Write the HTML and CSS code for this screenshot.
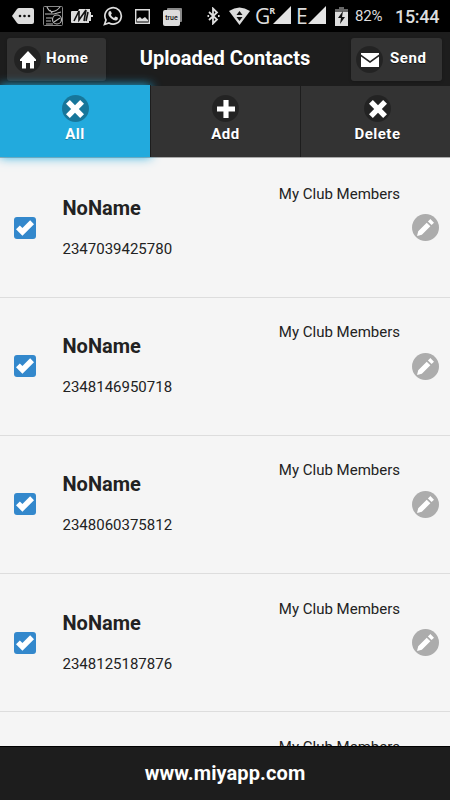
FILE: index.html
```html
<!DOCTYPE html>
<html lang="en">
<head>
  <meta charset="UTF-8">
  <meta name="viewport" content="width=device-width, initial-scale=1">
  <title>Uploaded Contacts</title>
  <link rel="stylesheet" href="styles.css">
</head>
<body>
  <!-- shared icons -->
  <svg class="defs" width="0" height="0">
    <symbol id="delete" viewBox="0 0 14 14">
      <path d="M14 3 11 0 7 4 3 0 0 3l4 4-4 4 3 3 4-4 4 4 3-3-4-4z"/>
    </symbol>
    <symbol id="plus" viewBox="0 0 14 14">
      <path d="M14 5H9V0H5v5H0v4h5v5h4V9h5z"/>
    </symbol>
    <symbol id="check" viewBox="0 0 14 14">
      <path d="M14 4 11 1 5.003 6.997 3 5 0 8l5 5z"/>
    </symbol>
    <symbol id="edit" viewBox="0 0 14 14">
      <path d="M1 10 0 14l4-1 7-7-3-3zM11 0 9 2l3 3 2-2z"/>
    </symbol>
    <symbol id="signal" viewBox="0 0 18 18">
      <path d="M18 0v18H0z"/>
    </symbol>
  </svg>

  <div class="status">
    <svg class="s-more" width="22" height="18" viewBox="0 0 22 18">
      <path fill="#ddd" d="M7 1h13q2 0 2 2v12q0 2-2 2H7q-1 0-2-1L0 9l5-7q1-1 2-1z"/>
      <g fill="#111"><circle cx="8" cy="9" r="1.3"/><circle cx="12.500" cy="9" r="1.300"/><circle cx="17" cy="9" r="1.300"/></g>
    </svg>
    <svg class="s-news" width="20" height="20" viewBox="0 0 20 20" fill="none" stroke="#bbb" stroke-width="1.200">
      <rect x=".5" y=".5" width="19" height="19" rx="1" stroke="#888" stroke-width="1"/>
      <path d="M4 1q2 5 6 4.500T17 1M2 8h9l7-2M3 12h6M3 15h5M3 18h7M9 7 7 4"/>
      <circle cx="14" cy="13.500" r="4.500"/>
      <path d="m11 16 6-4"/>
    </svg>
    <svg class="s-m" width="23" height="18" viewBox="0 0 23 18">
      <path fill="#ddd" d="M1 4h6l1-2h11v3h1v3h2v2h-2v4h-2v2H1q-1 0-1-1V5q0-1 1-1z"/>
      <path d="M3 14 8 4v9l7-10-2 11M17 5l-2 9" fill="none" stroke="#111" stroke-width="1.600"/>
    </svg>
    <svg class="s-whatsapp" width="20" height="20" viewBox="0 0 20 20">
      <path d="M1.500 18.500 3 14a8.200 8.200 0 1 1 3 3z" fill="none" stroke="#ddd" stroke-width="1.700"/>
      <path d="M6 5.500q1-1 2 0l.8 2-.9 1.500q1 2 3.100 3l1.500-1.400 2.300 1q.6 2.500-2 3-2 0-4.800-2.300T5.300 8q0-1.500.7-2.500z" fill="#ddd"/>
    </svg>
    <svg class="s-image" width="15" height="15" viewBox="0 0 15 15">
      <path d="M.7.700h13.600v13.600H.7z" fill="none" stroke="#ddd" stroke-width="1.400"/>
      <path d="M2 12.500V10l3-2 2 2 3-2 3 3v1.500z" fill="#ddd"/>
    </svg>
    <span class="s-true">true</span>
    <svg class="s-bt" width="13" height="18" viewBox="0 0 13 18" fill="none" stroke="#ddd" stroke-width="1.800">
      <path d="m2 5 8 7.500-4 4v-15l4 4L2 13"/>
      <path d="M.5 9h1.600M11 9h1.600"/>
    </svg>
    <svg class="s-wifi" width="21" height="18" viewBox="0 0 21 18">
      <path d="M0 4q10.500-7 21 0L10.500 18z" fill="#ddd"/>
      <path d="m10.500 4 3 4h-6zM7.500 10h6l-3 4z" fill="#111"/>
    </svg>
    <span class="net">G<span class="roaming">R</span></span>
    <svg class="s-sig1" width="18" height="18" fill="#e4e4e4"><use href="#signal"/></svg>
    <span class="net net-e">E</span>
    <svg class="s-sig2" width="18" height="18" fill="#e4e4e4"><use href="#signal"/></svg>
    <svg class="s-batt" width="13" height="19" viewBox="0 0 13 19">
      <path d="M4 0h5v2h4v3H0V2h4z" fill="#666"/>
      <path d="M0 5h13v14H0z" fill="#ddd"/>
      <path d="M8 4 3 11h3l-1 6 5-7H7z" fill="#111"/>
    </svg>
    <span class="percent">82%</span>
    <span class="clock">15:44</span>
  </div>

  <div class="header">
    <a class="btn btn-home">
      <span class="icon">
        <svg width="16" height="18" viewBox="0 0 16 18"><path d="M8 0 0 8.500V10h2v7.500h4V12h4v5.500h4V10h2V8.500z"/></svg>
      </span>
      <span class="label">Home</span>
    </a>
    <h1>Uploaded Contacts</h1>
    <a class="btn btn-send">
      <span class="icon">
        <svg width="18" height="14" viewBox="0 0 18 14"><path d="M0 0h18v1.500L9 8 0 1.500zM0 3.500 9 10l9-6.500V14H0z"/></svg>
      </span>
      <span class="label">Send</span>
    </a>
  </div>

  <div class="navbar">
    <a class="tab active"><span class="icon"><svg width="18" height="18"><use href="#delete"/></svg></span>All</a>
    <a class="tab"><span class="icon"><svg width="18" height="18"><use href="#plus"/></svg></span>Add</a>
    <a class="tab"><span class="icon"><svg width="18" height="18"><use href="#delete"/></svg></span>Delete</a>
  </div>

  <div class="list">
    <div class="row">
      <span class="checkbox"><svg width="18" height="18"><use href="#check"/></svg></span>
      <div class="contact">
        <p class="group">My Club Members</p>
        <h2>NoName</h2>
        <p class="phone">2347039425780</p>
      </div>
      <span class="edit"><svg width="17" height="17"><use href="#edit"/></svg></span>
    </div>
    <div class="row">
      <span class="checkbox"><svg width="18" height="18"><use href="#check"/></svg></span>
      <div class="contact">
        <p class="group">My Club Members</p>
        <h2>NoName</h2>
        <p class="phone">2348146950718</p>
      </div>
      <span class="edit"><svg width="17" height="17"><use href="#edit"/></svg></span>
    </div>
    <div class="row">
      <span class="checkbox"><svg width="18" height="18"><use href="#check"/></svg></span>
      <div class="contact">
        <p class="group">My Club Members</p>
        <h2>NoName</h2>
        <p class="phone">2348060375812</p>
      </div>
      <span class="edit"><svg width="17" height="17"><use href="#edit"/></svg></span>
    </div>
    <div class="row">
      <span class="checkbox"><svg width="18" height="18"><use href="#check"/></svg></span>
      <div class="contact">
        <p class="group">My Club Members</p>
        <h2>NoName</h2>
        <p class="phone">2348125187876</p>
      </div>
      <span class="edit"><svg width="17" height="17"><use href="#edit"/></svg></span>
    </div>
    <div class="row">
      <div class="contact">
        <p class="group">My Club Members</p>
      </div>
    </div>
  </div>

  <div class="footer">www.miyapp.com</div>
</body>
</html>
```

FILE: styles.css
```css
* {
  box-sizing: border-box;
}

body {
  margin: 0;
  width: 450px;
  height: 800px;
  overflow: hidden;
  display: flex;
  flex-direction: column;
  background: #f5f5f5;
  font-family: Roboto, sans-serif;
  color: #222;
}

h1, h2, p {
  margin: 0;
}

svg {
  display: block;
  flex: none;
}

.defs {
  display: none;
}

/* status bar */
.status {
  height: 32px;
  flex: none;
  display: flex;
  align-items: center;
  padding-left: 12px;
  background: #000;
  color: #ddd;
  white-space: nowrap;
}

.s-news { margin-left: 9px; }
.s-m { margin-left: 8px; }
.s-whatsapp { margin-left: 9px; }
.s-image { margin-left: 12px; }

.s-true {
  width: 17px;
  height: 16px;
  margin: 3px 0 0 13px;
  border-radius: 2px;
  background: #ddd;
  box-shadow: 3px -3px 0 -1px #888;
  color: #111;
  font-size: 7px;
  font-weight: 500;
  line-height: 16px;
  text-align: center;
}

.s-bt { margin-left: 27px; }
.s-wifi { margin-left: 9px; }

.s-sig1,
.s-sig2 {
  margin-top: -2px;
}

.net {
  width: 18px;
  margin-left: 5px;
  display: flex;
  font-family: "Open Sans", sans-serif;
  font-size: 21px;
  line-height: 31px;
}

.roaming {
  margin-left: -1px;
  font-size: 9px;
  font-weight: bold;
  line-height: 19px;
}

.net-e {
  width: 12px;
}

.s-batt { margin-left: 9px; }

.percent {
  width: 40px;
  margin-left: 7px;
  font-size: 15px;
  letter-spacing: -.2px;
}

.clock {
  font-size: 18px;
  font-weight: 500;
  letter-spacing: -.3px;
}

/* header */
.header {
  height: 54px;
  flex: none;
  display: flex;
  justify-content: space-between;
  padding: 6px 8px 0 7px;
  background: #1d1d1d;
  color: #fff;
  text-shadow: 0 1px 0 #111;
}

.header h1 {
  margin-left: -7px;
  font-size: 20px;
  font-weight: bold;
  line-height: 41px;
}

.btn {
  height: 43px;
  display: flex;
  align-items: center;
  gap: 5px;
  padding-left: 7px;
  border-radius: 3px;
  background: #333;
  box-shadow: 0 1px 3px rgba(0, 0, 0, .2);
  font-size: 15px;
  font-weight: bold;
  letter-spacing: .6px;
}

.btn-home { width: 99px; }

.btn-send {
  width: 91px;
  padding-left: 5px;
  gap: 7px;
}

.label {
  padding-bottom: 3px;
}

.icon {
  width: 27px;
  height: 27px;
  flex: none;
  display: flex;
  align-items: center;
  justify-content: center;
  border-radius: 50%;
  background: rgba(0, 0, 0, .3);
  fill: #fff;
}

/* tabs */
.navbar {
  height: 72px;
  flex: none;
  display: grid;
  grid-template-columns: 151px 150px 1fr;
  border-bottom: 1px solid #aaa;
}

.tab {
  position: relative;
  display: flex;
  flex-direction: column;
  align-items: center;
  padding-top: 9px;
  border-right: 1px solid #1d1d1d;
  background: #333;
  color: #fff;
  font-size: 15px;
  font-weight: bold;
  line-height: 24px;
  letter-spacing: .5px;
  text-shadow: 0 1px 0 #111;
}

.tab:last-child {
  padding-left: 4px;
  border-right: 0;
}

.tab.active {
  margin-top: -1px;
  padding-top: 10px;
  background: #22aadd;
  box-shadow: 0 0 10px #22aadd;
  text-shadow: 0 1px 0 #1c7ea3;
}

/* contacts */
.list {
  flex: 1;
  overflow: hidden;
}

.row {
  height: 138.25px;
  display: flex;
  align-items: center;
  padding: 0 11.5px 0 14px;
  border-bottom: 1px solid #ddd;
}

.row:first-child {
  height: 139.5px;
  padding-top: 1px;
}

.checkbox {
  width: 22px;
  height: 22px;
  display: flex;
  align-items: center;
  justify-content: center;
  border-radius: 3px;
  background: #3388cc;
  fill: #fff;
}

.contact {
  flex: 1;
  align-self: stretch;
  padding: 22.5px 11.5px 0 26.5px;
}

.group {
  font-size: 15px;
  line-height: 24px;
  text-align: right;
}

.contact h2 {
  margin-top: -10px;
  font-size: 20px;
  font-weight: bold;
  line-height: 24px;
}

.phone {
  margin-top: 17px;
  font-size: 15px;
  line-height: 24px;
}

.edit {
  width: 27px;
  height: 27px;
  display: flex;
  align-items: center;
  justify-content: center;
  border-radius: 50%;
  background: #acacac;
  fill: #fff;
}

.row:last-child .contact {
  padding-right: 38.5px;
}

.footer {
  height: 54px;
  flex: none;
  border-top: 1px solid #000;
  background: #1d1d1d;
  color: #fff;
  font-size: 20px;
  font-weight: bold;
  line-height: 53px;
  letter-spacing: .1px;
  text-align: center;
}
```
